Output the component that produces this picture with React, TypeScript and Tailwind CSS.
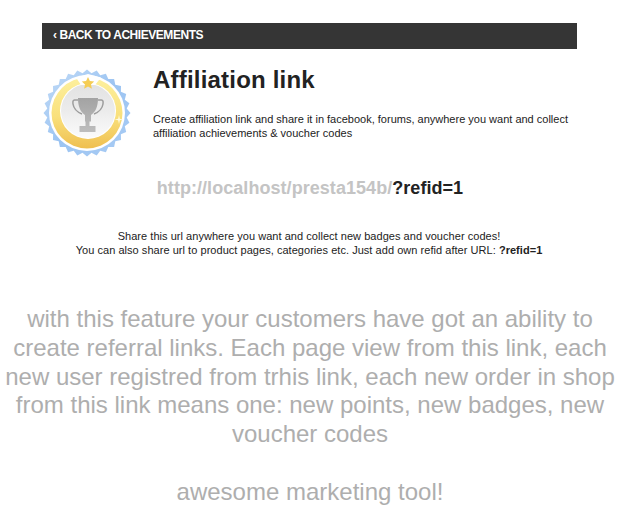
function Badge() {
  // toothed outer edge of the medal
  const points: string[] = [];
  for (let i = 0; i < 56; i++) {
    const a = (i / 56) * Math.PI * 2 - Math.PI / 2;
    const r = i % 2 === 0 ? 43.5 : 40;
    points.push(`${(44 + Math.cos(a) * r).toFixed(1)},${(45 + Math.sin(a) * r).toFixed(1)}`);
  }
  return (
    <svg width="88" height="90" viewBox="0 0 88 90" className="shrink-0">
      <defs>
        <linearGradient id="blue" x1="0" y1="0" x2="1" y2="1">
          <stop offset="0" stopColor="#c3dcf7" />
          <stop offset="0.5" stopColor="#9cc4f2" />
          <stop offset="1" stopColor="#a9ccf4" />
        </linearGradient>
        <linearGradient id="gold" x1="0" y1="0" x2="0" y2="1">
          <stop offset="0" stopColor="#fdf09e" />
          <stop offset="0.55" stopColor="#f9e07c" />
          <stop offset="1" stopColor="#efbf50" />
        </linearGradient>
        <linearGradient id="inner" x1="0" y1="0" x2="0" y2="1">
          <stop offset="0" stopColor="#e2e2e2" />
          <stop offset="0.5" stopColor="#ececec" />
          <stop offset="1" stopColor="#fbfbfb" />
        </linearGradient>
        <linearGradient id="cup" x1="0" y1="0" x2="0" y2="1">
          <stop offset="0" stopColor="#a3a3a3" />
          <stop offset="1" stopColor="#bdbdbd" />
        </linearGradient>
      </defs>
      <polygon points={points.join(" ")} fill="url(#blue)" />
      <circle cx="44" cy="45" r="38" fill="#ffffff" />
      <circle cx="44" cy="45" r="35.500" fill="url(#gold)" />
      <circle cx="45" cy="43" r="28" fill="#ffffff" />
      <circle cx="45" cy="43" r="27" fill="url(#inner)" />
      <path d="M33 9.500 L38 17 L52 17 L58 9.500 L45 6 Z" fill="#ffffff" />
      <path
        d="M45 9l1.900 4 4.300.5-3.200 2.900.9 4.300-3.900-2.200-3.900 2.200.9-4.300-3.200-2.900 4.300-.5z"
        fill="#f5cd55"
      />
      <path
        d="M35 30h20c0 9-2.500 14-7 17v6.500h-1.500V58h6v6H36.500v-6h6v-4.500H42V47c-4.500-3-7-8-7-17z"
        fill="url(#cup)"
      />
      <path
        d="M35 32h-3.500c-1.500 0-1.800 1.500-1.500 4 .6 4 4 8 9 10M55 32h3.500c1.500 0 1.800 1.500 1.500 4-.6 4-4 8-9 10"
        fill="none"
        stroke="#9d9d9d"
        strokeWidth="1.500"
      />
      <path d="M76 47l.8 3.700 3.700.8-3.700.8-.8 3.700-.8-3.700-3.700-.8 3.700-.8z" fill="#fffbe0" />
    </svg>
  );
}

export default function App() {
  return (
    <div className="w-[620px] h-[528px] overflow-hidden bg-white font-['Liberation_Sans',Arial,sans-serif]">
      <div className="mx-[42px] pt-[23px]">
        <div className="h-[26px] w-[535px] bg-[#353535] pl-[11px] text-[12px] font-bold leading-[25px] tracking-[-0.45px] text-white">
          ‹ BACK TO ACHIEVEMENTS
        </div>
        <div className="mt-[19px] flex items-start">
          <div className="ml-px w-[110px]">
            <Badge />
          </div>
          <div className="text-[#222222]">
            <h1 className="text-[24px] font-bold leading-[24px] tracking-[0.2px]">Affiliation link</h1>
            <p className="mt-[20px] w-[424px] text-[11px] leading-[14px]">
              Create affiliation link and share it in facebook, forums, anywhere you want and collect affiliation
              achievements &amp; voucher codes
            </p>
          </div>
        </div>
      </div>
      <div className="mt-[19px] text-center text-[18px] font-bold leading-[22px] tracking-[0.05px] text-[#222222]">
        <span className="text-[#c4c4c4]">http://localhost/presta154b/</span>?refid=1
      </div>
      <div className="mt-[30px] pr-[2px] text-center text-[11px] leading-[14px] tracking-[0.04px] text-[#222222]">
        <p>Share this url anywhere you want and collect new badges and voucher codes!</p>
        <p>
          You can also share url to product pages, categories etc. Just add own refid after URL:{" "}
          <b>?refid=1</b>
        </p>
      </div>
      <div className="mt-[48px] text-center text-[24px] leading-[28.8px] text-[#aeaeae]">
        <p>
          with this feature your customers have got an ability to create referral links. Each page view from this
          link, each new user registred from trhis link, each new order in shop from this link means one: new points,
          new badges, new voucher codes
        </p>
        <p className="mt-[28.8px]">awesome marketing tool!</p>
      </div>
    </div>
  );
}
